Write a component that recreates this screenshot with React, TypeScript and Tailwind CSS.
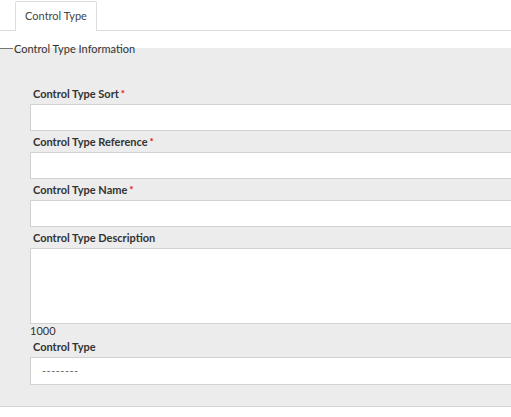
import React from "react";

function Label({ text, required }: { text: string; required?: boolean }) {
  return (
    <div className="h-[21px] flex items-end pb-[5px] pl-[3px] text-[11px] font-bold text-[#333] leading-none">
      <span>{text}</span>
      {required && <span className="text-[#e01010] text-[10px] ml-[2px] self-start mt-[5px]">*</span>}
    </div>
  );
}

export default function App() {
  return (
    <div className="w-[511px] h-[417px] overflow-hidden bg-white" style={{ fontFamily: 'Lato, "Open Sans", "Liberation Sans", sans-serif' }}>
      <div className="h-[31px] border-b border-[#dddddd] flex items-end pl-[15px]">
        <div className="h-[30px] w-[82px] -mb-px bg-white border border-b-0 border-[#dddddd] rounded-t-[2px] flex items-center justify-center text-[11px] text-[#444]">
          Control Type
        </div>
      </div>
      <div className="mt-[17px] w-[600px] bg-[#ececec] border-b border-[#d6d6d6] pb-[21px] flex flex-col">
        <div className="-mt-[7px] h-[14px] flex items-center text-[11px] text-[#333] leading-none">
          <div className="w-[13px] h-px bg-[#777]"></div>
          <span className="ml-px">Control Type Information</span>
        </div>
        <div className="pl-[30px] pt-[28px]">
          <Label text="Control Type Sort" required />
          <input className="block w-full h-[27px] bg-white border border-[#d2d2d2] outline-none" />
          <Label text="Control Type Reference" required />
          <input className="block w-full h-[27px] bg-white border border-[#d2d2d2] outline-none" />
          <Label text="Control Type Name" required />
          <input className="block w-full h-[27px] bg-white border border-[#d2d2d2] outline-none" />
          <Label text="Control Type Description" />
          <textarea className="block w-full h-[76px] bg-white border border-[#d2d2d2] outline-none resize-none" />
          <div className="h-[12px] flex items-end text-[11px] text-[#333] leading-none">1000</div>
          <Label text="Control Type" />
          <div className="h-[28px] bg-white border border-[#d2d2d2] flex items-center pl-[11px] text-[11px] text-[#666] tracking-[0.5px]">
            --------
          </div>
        </div>
      </div>
    </div>
  );
}
